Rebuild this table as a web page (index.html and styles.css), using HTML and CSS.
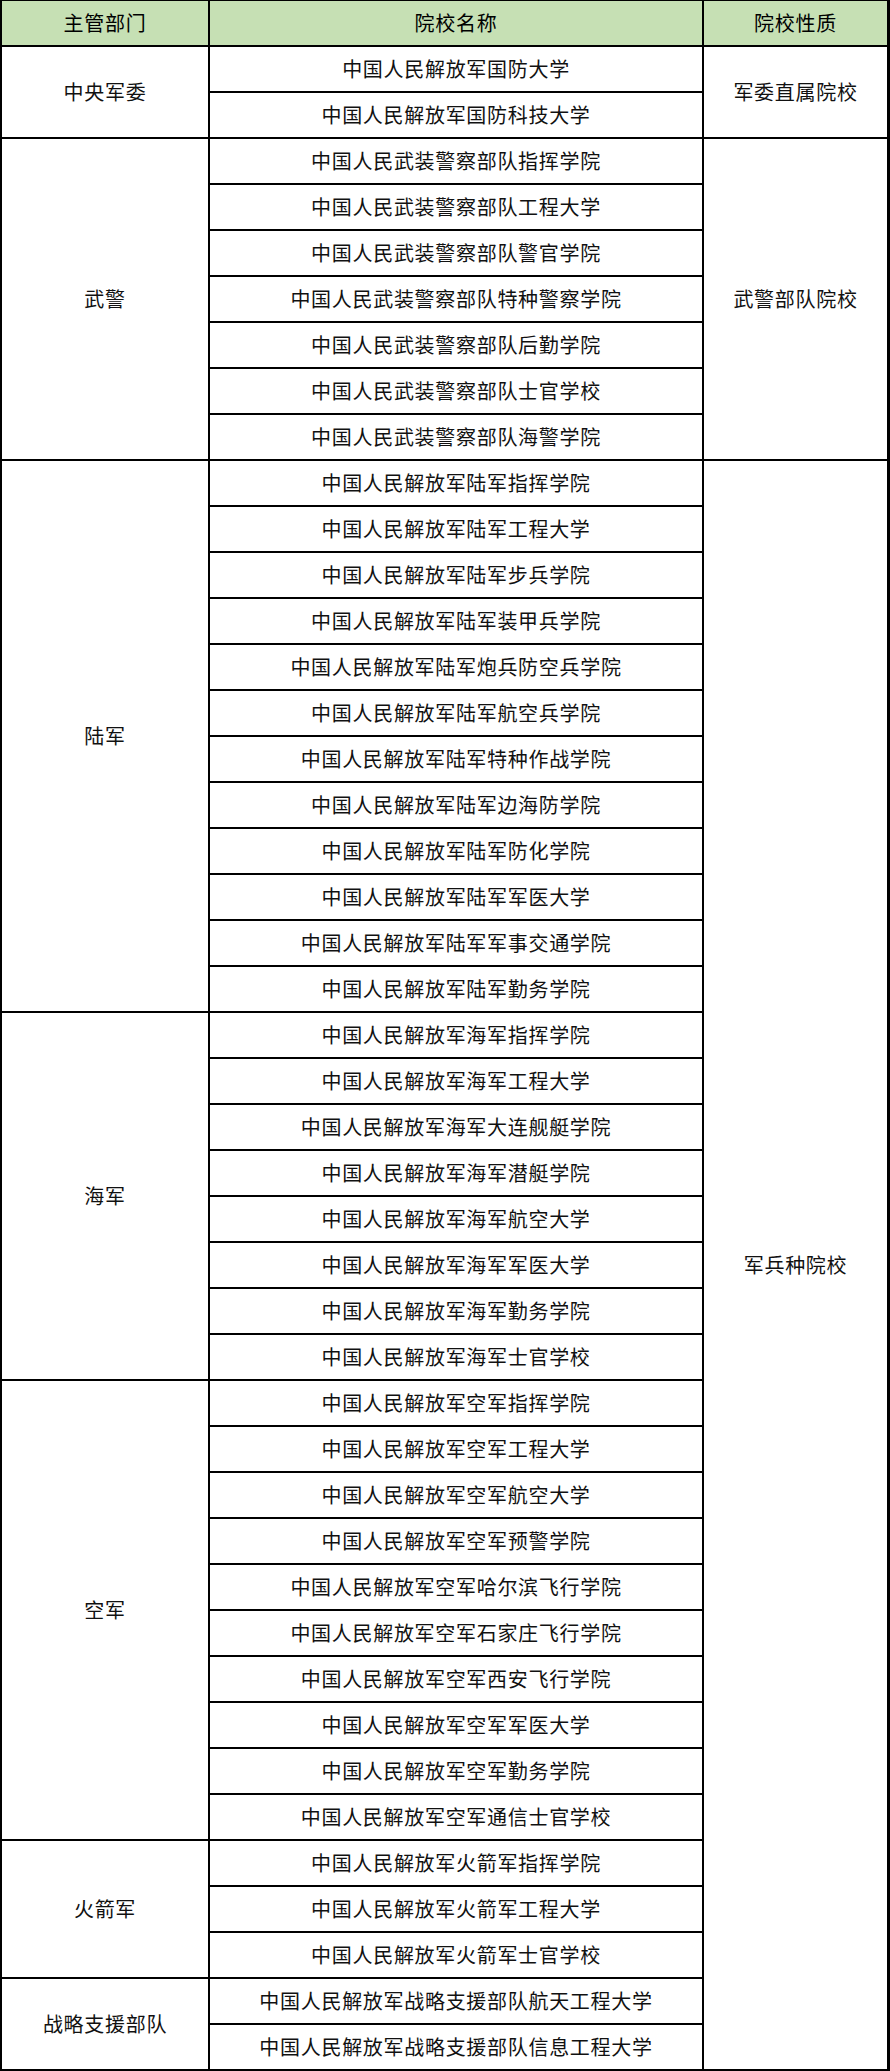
FILE: index.html
```html
<!DOCTYPE html>
<html lang="zh-CN">
<head>
<meta charset="utf-8">
<title>军队院校</title>
<link rel="stylesheet" href="styles.css">
</head>
<body>
<table class="schools">
<colgroup><col class="c1"><col class="c2"><col class="c3"></colgroup>
<thead>
<tr><th>主管部门</th><th>院校名称</th><th class="last">院校性质</th></tr>
</thead>
<tbody>
<tr><td rowspan="2">中央军委</td><td>中国人民解放军国防大学</td><td rowspan="2" class="last">军委直属院校</td></tr>
<tr><td>中国人民解放军国防科技大学</td></tr>

<tr><td rowspan="7">武警</td><td>中国人民武装警察部队指挥学院</td><td rowspan="7" class="last">武警部队院校</td></tr>
<tr><td>中国人民武装警察部队工程大学</td></tr>
<tr><td>中国人民武装警察部队警官学院</td></tr>
<tr><td>中国人民武装警察部队特种警察学院</td></tr>
<tr><td>中国人民武装警察部队后勤学院</td></tr>
<tr><td>中国人民武装警察部队士官学校</td></tr>
<tr><td>中国人民武装警察部队海警学院</td></tr>

<tr><td rowspan="12">陆军</td><td>中国人民解放军陆军指挥学院</td><td rowspan="35" class="last bottom">军兵种院校</td></tr>
<tr><td>中国人民解放军陆军工程大学</td></tr>
<tr><td>中国人民解放军陆军步兵学院</td></tr>
<tr><td>中国人民解放军陆军装甲兵学院</td></tr>
<tr><td>中国人民解放军陆军炮兵防空兵学院</td></tr>
<tr><td>中国人民解放军陆军航空兵学院</td></tr>
<tr><td>中国人民解放军陆军特种作战学院</td></tr>
<tr><td>中国人民解放军陆军边海防学院</td></tr>
<tr><td>中国人民解放军陆军防化学院</td></tr>
<tr><td>中国人民解放军陆军军医大学</td></tr>
<tr><td>中国人民解放军陆军军事交通学院</td></tr>
<tr><td>中国人民解放军陆军勤务学院</td></tr>

<tr><td rowspan="8">海军</td><td>中国人民解放军海军指挥学院</td></tr>
<tr><td>中国人民解放军海军工程大学</td></tr>
<tr><td>中国人民解放军海军大连舰艇学院</td></tr>
<tr><td>中国人民解放军海军潜艇学院</td></tr>
<tr><td>中国人民解放军海军航空大学</td></tr>
<tr><td>中国人民解放军海军军医大学</td></tr>
<tr><td>中国人民解放军海军勤务学院</td></tr>
<tr><td>中国人民解放军海军士官学校</td></tr>

<tr><td rowspan="10">空军</td><td>中国人民解放军空军指挥学院</td></tr>
<tr><td>中国人民解放军空军工程大学</td></tr>
<tr><td>中国人民解放军空军航空大学</td></tr>
<tr><td>中国人民解放军空军预警学院</td></tr>
<tr><td>中国人民解放军空军哈尔滨飞行学院</td></tr>
<tr><td>中国人民解放军空军石家庄飞行学院</td></tr>
<tr><td>中国人民解放军空军西安飞行学院</td></tr>
<tr><td>中国人民解放军空军军医大学</td></tr>
<tr><td>中国人民解放军空军勤务学院</td></tr>
<tr><td>中国人民解放军空军通信士官学校</td></tr>

<tr><td rowspan="3">火箭军</td><td>中国人民解放军火箭军指挥学院</td></tr>
<tr><td>中国人民解放军火箭军工程大学</td></tr>
<tr><td>中国人民解放军火箭军士官学校</td></tr>

<tr><td rowspan="2" class="bottom">战略支援部队</td><td>中国人民解放军战略支援部队航天工程大学</td></tr>
<tr><td class="bottom">中国人民解放军战略支援部队信息工程大学</td></tr>
</tbody>
</table>
</body>
</html>
```

FILE: styles.css
```css
html, body {
  margin: 0;
  padding: 0;
  background: #ffffff;
}

.schools {
  border-collapse: separate;
  border-spacing: 0;
  width: 890px;
  table-layout: fixed;
  border-left: 2px solid #000;
  border-top: 1px solid #000;
  font-family: "Noto Sans CJK SC", "Noto Sans", sans-serif;
  font-size: 20px;
  color: #111;
}

.c1 { width: 208px; }
.c2 { width: 494px; }
.c3 { width: 186px; }

.schools th,
.schools td {
  box-sizing: border-box;
  height: 46px;
  padding: 0;
  text-align: center;
  vertical-align: middle;
  border-right: 2px solid #000;
  border-bottom: 2px solid #000;
  letter-spacing: 0.7px;
  line-height: 1;
  font-weight: normal;
  white-space: nowrap;
}

.schools th {
  background: #c6e0b4;
  color: #000;
  font-weight: normal;
}

.schools .last {
  border-right-width: 3px;
}
```
